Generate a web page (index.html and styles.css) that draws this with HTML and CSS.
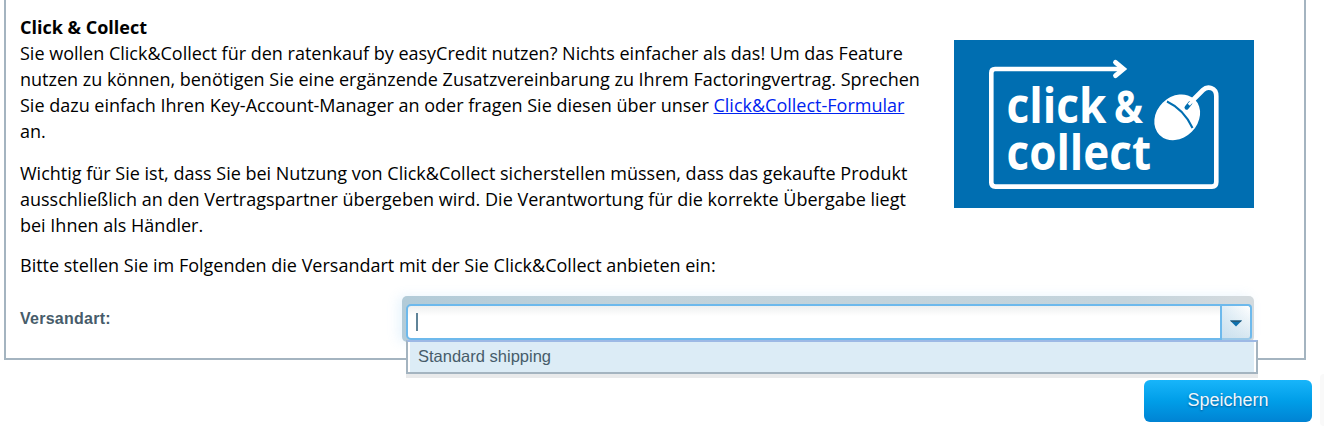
FILE: index.html
```html
<!DOCTYPE html>
<html lang="de">
<head>
<meta charset="utf-8">
<title>Click &amp; Collect</title>
<link rel="stylesheet" href="styles.css">
</head>
<body>
<main class="panel">
  <div class="intro">
    <div class="copy">
      <p><strong>Click &amp; Collect</strong><br>
      Sie wollen Click&amp;Collect für den ratenkauf by easyCredit nutzen? Nichts einfacher als das! Um das Feature<br>nutzen zu können, benötigen Sie eine ergänzende Zusatzvereinbarung zu Ihrem Factoringvertrag. Sprechen<br>Sie dazu einfach Ihren Key-Account-Manager an oder fragen Sie diesen über unser <a href="#">Click&amp;Collect-Formular</a><br>an.</p>
      <p>Wichtig für Sie ist, dass Sie bei Nutzung von Click&amp;Collect sicherstellen müssen, dass das gekaufte Produkt<br>ausschließlich an den Vertragspartner übergeben wird. Die Verantwortung für die korrekte Übergabe liegt<br>bei Ihnen als Händler.</p>
      <p class="last">Bitte stellen Sie im Folgenden die Versandart mit der Sie Click&amp;Collect anbieten ein:</p>
    </div>
    <svg class="logo" width="300" height="168" viewBox="0 0 300 168" role="img" aria-label="click &amp; collect">
      <rect width="300" height="168" fill="#006eb1"/>
      <g fill="none" stroke="#fff" stroke-width="4.6">
        <path d="M169 29H41Q37.300 29 37.300 33V142.500Q37.300 146.600 41.500 146.600H258Q262.300 146.600 262.300 142V56C262.300 47.500 253.500 45.500 249 50L238 61"/>
        <path d="M161.500 22.300L169.500 29L161.500 35.700" stroke-width="4.800" stroke-linecap="round"/>
      </g>
      <g class="logo-text">
        <text x="52.500" y="82.500" textLength="100" lengthAdjust="spacingAndGlyphs">click</text>
        <text x="160" y="82.500" font-size="45" textLength="29" lengthAdjust="spacingAndGlyphs">&amp;</text>
        <text x="52.500" y="129.500" textLength="144.500" lengthAdjust="spacingAndGlyphs">collect</text>
      </g>
      <ellipse cx="223.200" cy="77.300" rx="25" ry="20.600" transform="rotate(-45 223.200 77.300)" fill="#fff"/>
      <g fill="none">
        <path d="M213 61.500Q230 69.500 238.500 88" stroke="#006eb1" stroke-width="2"/>
        <path d="M232.600 67.600L236.200 63.200" stroke="#006eb1" stroke-width="4.200" stroke-linecap="round"/>
        <path d="M234.800 64.800L240 59" stroke="#fff" stroke-width="3"/>
      </g>
    </svg>
  </div>
  <div class="field">
    <label for="shipping">Versandart:</label>
    <div class="combo">
      <div class="control">
        <div class="input" id="shipping"><span class="caret"></span></div>
        <div class="trigger"><svg width="12" height="7" viewBox="0 0 12 7"><path d="M0 .5H12L6 6.500Z" fill="#0d70ad"/><path d="M0 .5H12L10.500 2H1.500Z" fill="#255978"/></svg></div>
      </div>
      <div class="menu"><div class="option">Standard shipping</div></div>
    </div>
  </div>
</main>
<footer class="actions"><button class="save">Speichern</button><span class="edge"></span></footer>
</body>
</html>
```
FILE: styles.css
```css
* { box-sizing: border-box; }
body {
  margin: 0;
  height: 436px;
  overflow: hidden;
  background: #fff;
  color: #000;
  font-family: "Open Sans", sans-serif;
}
.panel {
  width: 1302px;
  height: 360px;
  margin-left: 4px;
  padding: 14px 50px 0 14px;
  border: 2px solid #a4b4c0;
  border-top: 0;
}
.intro { display: flex; justify-content: space-between; height: 282px; }
.copy { font-size: 18px; line-height: 26px; white-space: nowrap; }
.copy p { margin: 0 0 16px; }
.copy p.last { margin-top: -2px; }
.copy a { color: #0023f0; }
.logo { flex: none; margin-top: 26px; }
.logo-text {
  fill: #fff;
  font-family: "Open Sans", sans-serif;
  font-size: 48px;
  font-weight: 700;
}
.field { display: flex; justify-content: space-between; }
.field label {
  padding-top: 14px;
  color: #475c6a;
  font: bold 16px/18px "Liberation Sans", Arial, sans-serif;
  letter-spacing: .25px;
}
.combo {
  position: relative;
  width: 852px;
  height: 46px;
  padding: 8px 2px 0 4px;
  border-radius: 5px;
  background: linear-gradient(90deg, #b2cbd8, #c1d2da 25%, #c4d4dc 85%, #d3dade 98%);
  box-shadow: -4px 0 12px rgba(110, 185, 240, .16);
}
.control { display: flex; height: 36px; }
.input {
  width: 816px;
  padding: 7px 8px;
  border: 2px solid #6db9ec;
  border-radius: 5px 0 0 5px;
  background: linear-gradient(#eef0f0, #fff 10px);
}
.caret { display: block; width: 2px; height: 18px; background: #5f8398; }
.trigger {
  display: flex;
  flex: 1;
  align-items: center;
  justify-content: center;
  padding-top: 2px;
  border: 2px solid #6db9ec;
  border-left: 0;
  border-bottom-color: #9bc9e8;
  border-radius: 0 4px 4px 0;
  background: linear-gradient(90deg, rgba(190, 218, 236, .5), transparent), linear-gradient(#fff, #d7e7f1);
}
.menu {
  position: absolute;
  top: 44px;
  left: 4px;
  width: 852px;
  height: 34px;
  padding: 0 2px;
  border: 2px solid #a4b4c0;
  border-top-color: #9db9e5;
  background: #fff;
  box-shadow: 0 4px 0 #e9eaeb;
}
.option {
  height: 30px;
  padding-left: 8px;
  background: #dcecf6;
  color: #475c6a;
  font: 16.5px/29px "Liberation Sans", Arial, sans-serif;
}
.actions { display: flex; justify-content: flex-end; padding-top: 14px; }
.save {
  width: 168px;
  height: 42px;
  margin-top: 6px;
  padding: 0 0 2px;
  border: 0;
  border-radius: 6px;
  background: linear-gradient(#18b5fa, #009ee8 50%, #0083d3);
  color: #eef7fd;
  font: 18px "Liberation Sans", Arial, sans-serif;
  text-shadow: 0 1px 2px rgba(0, 50, 100, .6);
}
.edge { width: 4px; height: 52px; margin-left: 8px; border-radius: 4px 0 0 4px; background: #f9f9f9; }
```
